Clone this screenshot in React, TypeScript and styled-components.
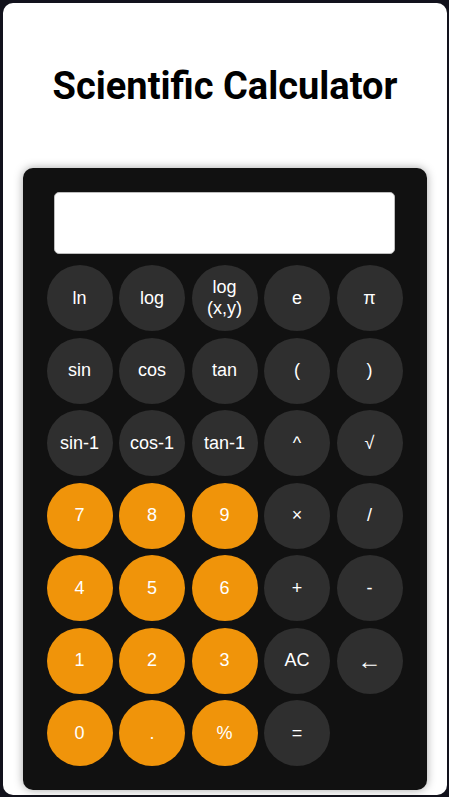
import React from "react";
import styled, { createGlobalStyle } from "styled-components";

const Global = createGlobalStyle`
  html, body { margin: 0; padding: 0; }
  body {
    background: #12121c;
    font-family: "Liberation Sans", Arial, sans-serif;
  }
  #root { padding: 3px 2px 2px 3px; box-sizing: border-box; }
`;

const Card = styled.div`
  box-sizing: border-box;
  width: 444px;
  height: 792px;
  background: #ffffff;
  border-radius: 10px;
  padding-top: 61px;
  display: flex;
  flex-direction: column;
  align-items: center;
`;

const Title = styled.h1`
  margin: 0 0 60px 0;
  font-family: Roboto, "Liberation Sans", sans-serif;
  font-weight: 700;
  font-size: 38px;
  line-height: 44px;
  color: #000;
  text-align: center;
`;

const Calculator = styled.div`
  box-sizing: border-box;
  width: 404px;
  margin-left: -1px;
  background: #111111;
  border-radius: 10px;
  padding: 24px;
  box-shadow: 0 0 10px rgba(0, 0, 0, 0.35);
  display: flex;
  flex-direction: column;
  align-items: center;
`;

const Display = styled.div`
  box-sizing: border-box;
  width: 341px;
  height: 62px;
  background: #fff;
  border: 1px solid #bdbdbd;
  border-radius: 5px;
  margin-bottom: 11px;
`;

const Keys = styled.div`
  display: grid;
  grid-template-columns: repeat(5, 66px);
  grid-auto-rows: 66px;
  gap: 6.5px;
`;

const Key = styled.button<{ $orange?: boolean; $big?: boolean }>`
  width: 66px;
  height: 66px;
  border: none;
  border-radius: 50%;
  padding: 0;
  background: ${(p) => (p.$orange ? "#f0940a" : "#2f2f2f")};
  color: #ffffff;
  font-family: "Liberation Sans", Arial, sans-serif;
  font-size: ${(p) => (p.$big ? "24px" : "18px")};
  line-height: 1.15;
  display: flex;
  align-items: center;
  justify-content: center;
  text-align: center;
  cursor: pointer;
`;

const keys: { label: React.ReactNode; orange?: boolean; big?: boolean }[] = [
  { label: "ln" },
  { label: "log" },
  { label: <>log<br />(x,y)</> },
  { label: "e" },
  { label: "π" },
  { label: "sin" },
  { label: "cos" },
  { label: "tan" },
  { label: "(" },
  { label: ")" },
  { label: "sin-1" },
  { label: "cos-1" },
  { label: "tan-1" },
  { label: "^" },
  { label: "√" },
  { label: "7", orange: true },
  { label: "8", orange: true },
  { label: "9", orange: true },
  { label: "×" },
  { label: "/" },
  { label: "4", orange: true },
  { label: "5", orange: true },
  { label: "6", orange: true },
  { label: "+" },
  { label: "-" },
  { label: "1", orange: true },
  { label: "2", orange: true },
  { label: "3", orange: true },
  { label: "AC" },
  { label: "←", big: true },
  { label: "0", orange: true },
  { label: ".", orange: true },
  { label: "%", orange: true },
  { label: "=" },
];

export default function App() {
  return (
    <>
      <Global />
      <Card>
        <Title>Scientific Calculator</Title>
        <Calculator>
          <Display />
          <Keys>
            {keys.map((k, i) => (
              <Key key={i} $orange={k.orange} $big={k.big}>
                {k.label}
              </Key>
            ))}
          </Keys>
        </Calculator>
      </Card>
    </>
  );
}
